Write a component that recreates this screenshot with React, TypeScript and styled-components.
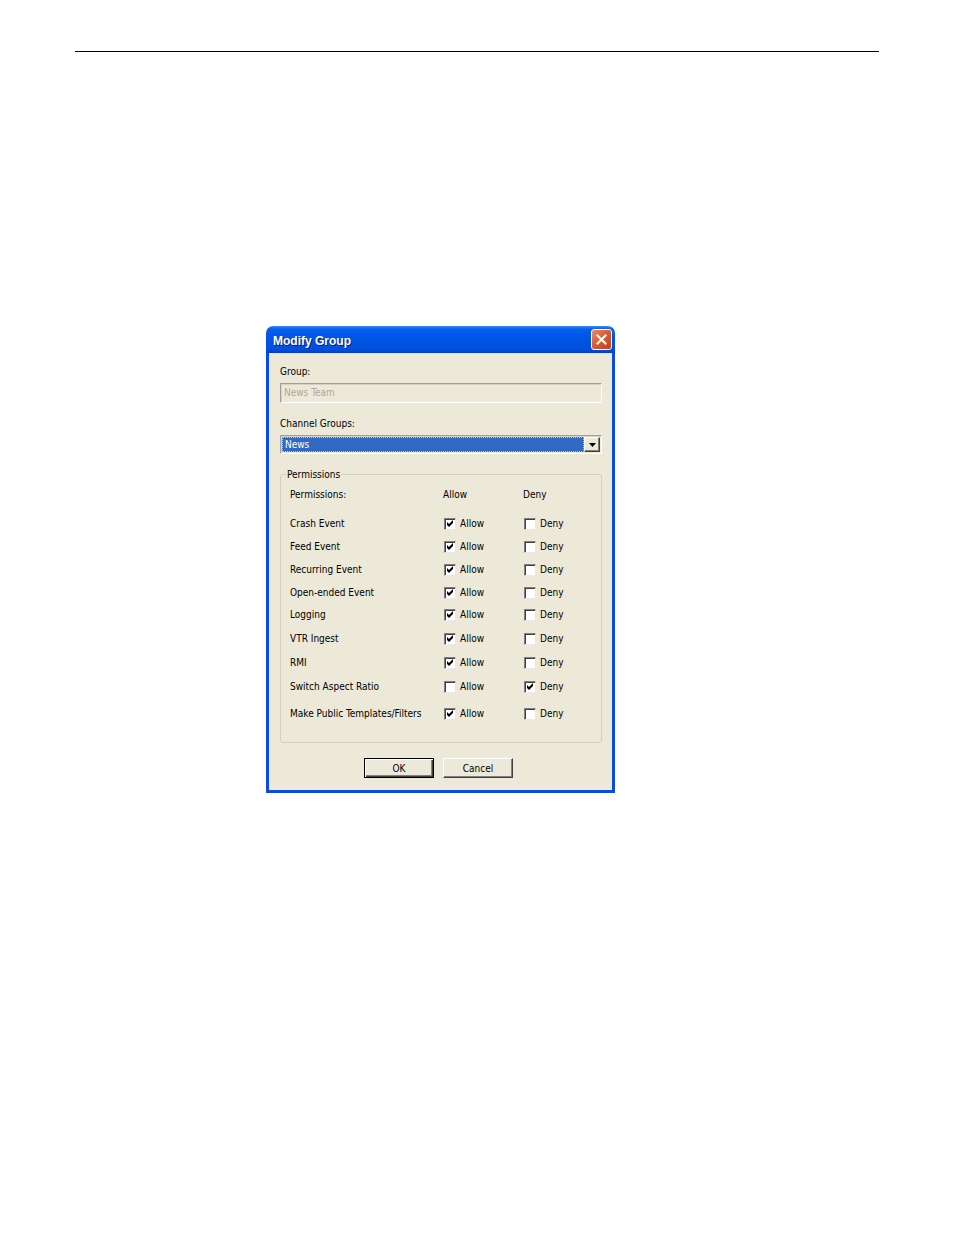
import styled, { createGlobalStyle } from "styled-components";

const GlobalStyle = createGlobalStyle`
  html, body {
    margin: 0;
    padding: 0;
    background: #ffffff;
  }
  body {
    font-family: "DejaVu Sans Condensed", "DejaVu Sans", "Liberation Sans", sans-serif;
    font-stretch: condensed;
    font-size: 10px;
    color: #000;
  }
`;

const Page = styled.div`
  width: 954px;
  height: 1235px;
  padding-top: 51px;
  box-sizing: border-box;
`;

const Rule = styled.div`
  margin-left: 75px;
  width: 804px;
  height: 1px;
  background: #000;
`;

const Window = styled.div`
  margin: 274px 0 0 266px;
  width: 349px;
`;

const TitleBar = styled.div`
  height: 27px;
  border-radius: 7px 7px 0 0;
  background: linear-gradient(
    #3b8cf5 0,
    #0a5fea 3px,
    #0058ee 8px,
    #0054e3 50%,
    #0050dc 85%,
    #0040c8 100%
  );
  display: flex;
  align-items: center;
  justify-content: space-between;
  padding: 2px 3px 0 7px;
  box-sizing: border-box;
`;

const Title = styled.span`
  font-family: "Liberation Sans", Arial, sans-serif;
  font-stretch: normal;
  font-weight: bold;
  font-size: 12px;
  color: #ffffff;
  text-shadow: 1px 1px 0 #0a1883;
`;

const CloseButton = styled.button`
  width: 21px;
  height: 21px;
  margin-top: -2px;
  padding: 0;
  border: 1px solid #ffffff;
  border-radius: 3px;
  background: linear-gradient(135deg, #e8906c 0%, #d95d34 45%, #c2401c 100%);
  display: flex;
  align-items: center;
  justify-content: center;
`;

const Body = styled.div`
  background: #ece9d8;
  border: 3px solid #0a4be2;
  border-top: 0;
  padding: 12px 10px 12px 11px;
`;

const FieldLabel = styled.div<{ $mt?: number }>`
  line-height: 13px;
  margin-top: ${(p) => p.$mt ?? 0}px;
`;

const TextInput = styled.div`
  margin-top: 5px;
  height: 20px;
  box-sizing: border-box;
  border: 1px solid;
  border-color: #a0a0a0 #ffffff #ffffff #a0a0a0;
  box-shadow: inset 1px 1px 0 #d4d0c8;
  color: #aca899;
  line-height: 17px;
  padding-left: 3px;
`;

const Select = styled.div`
  margin-top: 5px;
  height: 19px;
  box-sizing: border-box;
  border: 1px solid;
  border-color: #a0a0a0 #ffffff #ffffff #a0a0a0;
  box-shadow: inset 1px 1px 0 #d4d0c8;
  display: flex;
  padding: 1px;
`;

const SelectValue = styled.div`
  flex: 1;
  background: #316ac5;
  color: #ffffff;
  border: 1px dotted #f4c350;
  line-height: 13px;
  padding-left: 2px;
`;

const DropButton = styled.div`
  width: 16px;
  box-sizing: border-box;
  border: 1px solid;
  border-color: #ffffff #404040 #404040 #ffffff;
  box-shadow: inset -1px -1px 0 #808080;
  background: #ece9d8;
  display: flex;
  align-items: center;
  justify-content: center;
`;

const GroupBox = styled.fieldset`
  margin: 14px 0 0 0;
  padding: 0;
  min-width: 0;
  border: 1px solid #d0d0bf;
  border-radius: 3px;
`;

const Legend = styled.legend`
  margin-left: 5px;
  padding: 0 1px;
  line-height: 13px;
`;

const Grid = styled.div`
  padding: 2px 0 17px 9px;
`;

const Row = styled.div<{ $mt?: number }>`
  display: grid;
  grid-template-columns: 154px 80px 1fr;
  align-items: center;
  height: 23px;
  margin-top: ${(p) => p.$mt ?? 0}px;
`;

const HeadCell = styled.span`
  margin-left: -1px;
`;

const Check = styled.label`
  display: flex;
  align-items: center;
  gap: 4px;
`;

const Box = styled.span`
  width: 12px;
  height: 12px;
  box-sizing: border-box;
  border: 1px solid;
  border-color: #808080 #e8e8e8 #e8e8e8 #808080;
  box-shadow: inset 1px 1px 0 #404040;
  background: #ffffff;
  display: flex;
  align-items: center;
  justify-content: center;
`;

const Buttons = styled.div`
  margin-top: 15px;
  display: flex;
  justify-content: center;
  gap: 9px;
  padding-right: 5px;
`;

const Button = styled.button<{ $default?: boolean }>`
  width: 70px;
  height: 20px;
  padding: 0;
  font: inherit;
  color: #000;
  background: #ece9d8;
  box-sizing: border-box;
  border: 1px solid;
  border-color: ${(p) =>
    p.$default ? "#000000" : "#ffffff #404040 #404040 #ffffff"};
  box-shadow: ${(p) =>
    p.$default
      ? "inset 1px 1px 0 #ffffff, inset -1px -1px 0 #404040, inset -2px -2px 0 #808080"
      : "inset -1px -1px 0 #808080"};
`;

function CheckMark() {
  return (
    <svg width="7" height="7" viewBox="0 0 7 7">
      <polygon points="0,2 2,4 6,0 6,3 2,7 0,5" fill="#000" />
    </svg>
  );
}

function CheckBox({ checked, label }: { checked: boolean; label: string }) {
  return (
    <Check>
      <Box>{checked && <CheckMark />}</Box>
      {label}
    </Check>
  );
}

type Perm = { name: string; allow: boolean; mt: number };

const perms: Perm[] = [
  { name: "Crash Event", allow: true, mt: 6 },
  { name: "Feed Event", allow: true, mt: 0 },
  { name: "Recurring Event", allow: true, mt: 0 },
  { name: "Open-ended Event", allow: true, mt: 0 },
  { name: "Logging", allow: true, mt: -1 },
  { name: "VTR Ingest", allow: true, mt: 1 },
  { name: "RMI", allow: true, mt: 1 },
  { name: "Switch Aspect Ratio", allow: false, mt: 1 },
  { name: "Make Public Templates/Filters", allow: true, mt: 4 },
];

export default function App() {
  return (
    <Page>
      <GlobalStyle />
      <Rule />
      <Window>
        <TitleBar>
          <Title>Modify Group</Title>
          <CloseButton>
            <svg width="11" height="11" viewBox="0 0 11 11">
              <path d="M1.5 1.5 L9.5 9.5 M9.5 1.5 L1.5 9.5" stroke="#fff" strokeWidth="2.2" strokeLinecap="square" />
            </svg>
          </CloseButton>
        </TitleBar>
        <Body>
          <FieldLabel>Group:</FieldLabel>
          <TextInput>News Team</TextInput>
          <FieldLabel $mt={14}>Channel Groups:</FieldLabel>
          <Select>
            <SelectValue>News</SelectValue>
            <DropButton>
              <svg width="7" height="4" viewBox="0 0 7 4">
                <polygon points="0,0 7,0 3.5,4" fill="#000" />
              </svg>
            </DropButton>
          </Select>
          <GroupBox>
            <Legend>Permissions</Legend>
            <Grid>
              <Row>
                <span>Permissions:</span>
                <HeadCell>Allow</HeadCell>
                <HeadCell>Deny</HeadCell>
              </Row>
              {perms.map((p) => (
                <Row key={p.name} $mt={p.mt}>
                  <span>{p.name}</span>
                  <CheckBox checked={p.allow} label="Allow" />
                  <CheckBox checked={!p.allow} label="Deny" />
                </Row>
              ))}
            </Grid>
          </GroupBox>
          <Buttons>
            <Button $default>OK</Button>
            <Button>Cancel</Button>
          </Buttons>
        </Body>
      </Window>
    </Page>
  );
}
